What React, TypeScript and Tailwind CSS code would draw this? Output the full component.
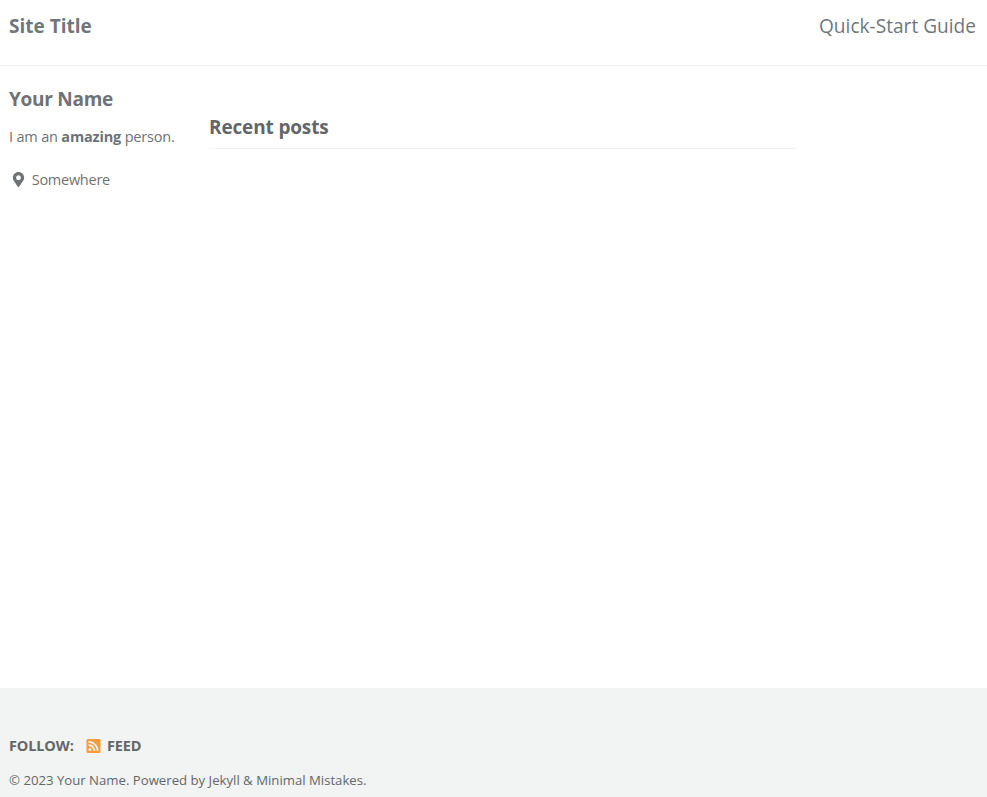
import { FaMapMarkerAlt, FaRssSquare } from "react-icons/fa";

export default function App() {
  return (
    <div className="flex h-[797px] w-[987px] flex-col overflow-hidden whitespace-nowrap bg-white font-['Open_Sans','Noto_Sans',sans-serif] text-[#6f777d]">
      <header className="flex h-[66px] justify-between border-b border-[#f2f3f3] pl-[9px] pr-[11px] pt-3">
        <a className="h-7 text-[19px] font-bold leading-7">Site Title</a>
        <a className="h-7 text-[19.1px] leading-7">Quick-Start Guide</a>
      </header>
      <main className="flex flex-1">
        <aside className="w-[209px] pl-[9px] pt-[19px] text-[#6f7276]">
          <h3 className="text-[19px] font-bold leading-7 tracking-[-0.27px]">Your Name</h3>
          <p className="mt-[13px] text-[14.5px] leading-[22px] tracking-[-0.18px]">I am an <strong>amazing</strong> person.</p>
          <div className="mt-[21px] flex items-center pl-[3px] text-[14.5px] leading-[22px] tracking-[-0.26px]">
            <FaMapMarkerAlt className="relative -top-px mr-[6.7px] h-[15px] w-[13px]" />
            <span>Somewhere</span>
          </div>
        </aside>
        <section className="w-[588px] pt-[47px]">
          <h3 className="h-[36px] border-b border-[#f2f3f3] text-[19px] font-bold leading-7 tracking-[-0.15px] text-[#646769]">Recent posts</h3>
        </section>
      </main>
      <footer className="h-[109px] bg-[#f2f3f3] pl-[9px] pt-[47px] text-[#646769]">
        <div className="flex h-[22px] items-center text-[14.5px] font-bold leading-[22px] tracking-[-0.13px]">
          <span className="w-[77px]">FOLLOW:</span>
          <FaRssSquare className="h-[16px] w-[15px] text-[#fa9b39]" />
          <span className="ml-[6px]">FEED</span>
        </div>
        <p className="mt-[13px] text-[13.18px] leading-[20px]">© 2023 Your Name. Powered by Jekyll &amp; Minimal Mistakes.</p>
      </footer>
    </div>
  );
}
